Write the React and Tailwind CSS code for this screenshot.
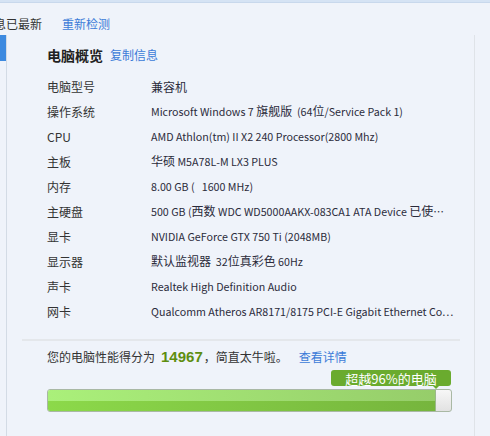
import React from "react";

const rows = [
  ["电脑型号", "兼容机"],
  ["操作系统", "Microsoft Windows 7 旗舰版  (64位/Service Pack 1)"],
  ["CPU", "AMD Athlon(tm) II X2 240 Processor(2800 Mhz)"],
  ["主板", "华硕 M5A78L-M LX3 PLUS"],
  ["内存", "8.00 GB (   1600 MHz)"],
  ["主硬盘", "500 GB (西数 WDC WD5000AAKX-083CA1 ATA Device 已使…"],
  ["显卡", "NVIDIA GeForce GTX 750 Ti (2048MB)"],
  ["显示器", "默认监视器  32位真彩色 60Hz"],
  ["声卡", "Realtek High Definition Audio"],
  ["网卡", "Qualcomm Atheros AR8171/8175 PCI-E Gigabit Ethernet Co…"],
];

function Mixed({ text }) {
  const parts = text.match(/[\u3000-\u9fff\uff00-\uffef]+|[^\u3000-\u9fff\uff00-\uffef]+/g) || [];
  return (
    <>
      {parts.map((p, i) =>
        /[\u3000-\u9fff\uff00-\uffef]/.test(p) ? (
          <span key={i} className="text-[12px]">{p}</span>
        ) : (
          <span key={i} className="text-[10.7px] whitespace-pre">{p}</span>
        )
      )}
    </>
  );
}

export default function App() {
  return (
    <div
      className="w-[490px] h-[436px] overflow-hidden bg-[#eff3fa] text-[#333] flex flex-col"
      style={{ fontFamily: '"Noto Sans CJK SC", "Noto Sans", sans-serif' }}
    >
      <div className="h-[3px] bg-[#d5e3f4] border-b border-[#c8d8ec] shrink-0" />
      <div className="h-[32px] shrink-0 flex items-center text-[12px] pt-[9px]">
        <span className="ml-[-6px]">息已最新</span>
        <span className="ml-[20px] text-[#3b7bd8]">重新检测</span>
      </div>
      <div className="flex-1 flex">
        <div className="w-[6px] shrink-0">
          <div className="h-[26px] bg-[#3d8ae0]" />
        </div>
        <div className="w-px bg-[#d3dbe5] shrink-0" />
        <div className="w-[467px] shrink-0 flex flex-col">
          <div className="pl-[40px] pt-[10px]">
            <div className="h-[20px] flex items-center">
              <span className="font-bold text-[14px] text-[#222]">电脑概览</span>
              <span className="ml-[7px] text-[12px] text-[#3b7bd8]">复制信息</span>
            </div>
            <div className="mt-[9px] flex flex-col">
              {rows.map(([k, v]) => (
                <div key={k} className="h-[25px] flex items-center text-[12px]">
                  <span className="w-[104px] shrink-0">{k}</span>
                  <span className="text-[#2b2b3a] whitespace-nowrap">
                    <Mixed text={v} />
                  </span>
                </div>
              ))}
            </div>
          </div>
          <div className="ml-[15px] w-[438px] h-[2px] bg-[#e4e7eb] mt-[15px]" />
          <div className="pl-[40px]">
            <div className="h-[20px] mt-[6px] flex items-center text-[12px]">
              <span>您的电脑性能得分为</span>
              <span
                className="ml-[6px] mr-[1px] font-bold text-[15px] text-[#5e8e10]"
                style={{ fontFamily: '"Liberation Sans", sans-serif' }}
              >
                14967
              </span>
              <span>，简直太牛啦。</span>
              <span className="ml-[11px] text-[#3b7bd8]">查看详情</span>
            </div>
            <div className="w-[405px] flex flex-col">
              <div className="flex justify-end mt-[3px] pr-[1px]">
                <div className="relative h-[16px] w-[120px] rounded-[3px] bg-[#6aab2e] text-white text-[13px] flex items-center justify-center leading-none">
                  超越96%的电脑
                  <div className="absolute left-[102px] bottom-[-3px] w-0 h-0 border-l-[3px] border-r-[3px] border-t-[3px] border-l-transparent border-r-transparent border-t-[#6aab2e]" />
                </div>
              </div>
              <div className="mt-[3px] h-[23px] rounded-[3px] border border-[#a9b8a4] flex overflow-hidden bg-gradient-to-b from-[#f7f7f7] to-[#e2e2e2]">
                <div className="w-[388px] h-full flex flex-col border-r border-[#9ab88a]">
                  <div className="h-1/2 bg-gradient-to-r from-[#aaf07a] to-[#96cd6a]" />
                  <div className="h-1/2 bg-gradient-to-r from-[#8cd94a] to-[#76b53d]" />
                </div>
              </div>
            </div>
          </div>
        </div>
        <div className="w-px bg-[#dfe3e8] shrink-0" />
      </div>
    </div>
  );
}
